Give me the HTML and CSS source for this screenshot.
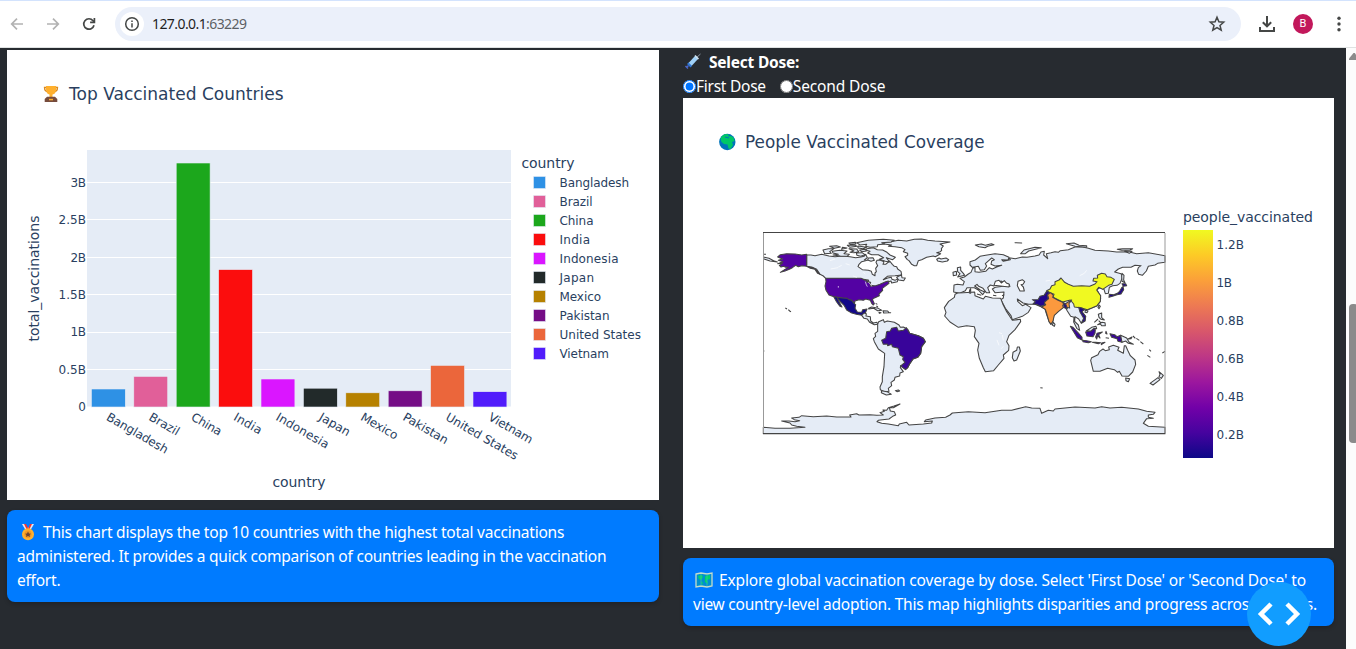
FILE: index.html
```html
<!DOCTYPE html>
<html lang="en">
<head>
<meta charset="utf-8">
<title>Vaccination Dashboard</title>
<link rel="stylesheet" href="styles.css">
</head>
<body>
<header class="toolbar">
  <div class="nav">
    <svg width="16" height="16" viewBox="0 0 16 16" class="nav-off"><path d="M14 8H3M8 2.700L2.700 8L8 13.300"/></svg>
    <svg width="16" height="16" viewBox="0 0 16 16" class="nav-off"><path d="M2 8H13M8 2.700L13.300 8L8 13.300"/></svg>
    <svg width="16" height="16" viewBox="0 0 16 16" class="nav-on"><path d="M13 9.200A5.200 5.200 0 1 1 12 4.700L13.300 6"/><path d="M13.400 2V6.300H9.100"/></svg>
  </div>
  <div class="address">
    <span class="site-info"><svg width="16" height="16" viewBox="0 0 16 16"><circle cx="8" cy="8" r="6.300"/><path d="M8 7.300V11.500M8 4.500V6"/></svg></span>
    <span class="url"><b>127.0.0.1</b>:63229</span>
    <svg class="star" width="18" height="18" viewBox="0 0 18 18"><path d="M9 2.300L10.900 6.800L15.700 7.200L12 10.400L13.200 15.200L9 12.600L4.800 15.200L6 10.400L2.300 7.200L7.100 6.800Z"/></svg>
  </div>
  <svg class="download" width="18" height="18" viewBox="0 0 18 18"><path d="M9 1V11M4.800 7.200L9 11.300L13.200 7.200M2 12V16H16V12"/></svg>
  <span class="avatar">B</span>
  <svg class="more" width="4" height="16" viewBox="0 0 4 16"><circle cx="2" cy="2.300" r="1.700"/><circle cx="2" cy="8" r="1.700"/><circle cx="2" cy="13.700" r="1.700"/></svg>
</header>
<div class="viewport">
  <main class="page">
    <section class="column column-left">
      <svg class="chart" viewBox="7 50 652 450" width="652" height="450">
        <g class="trophy">
          <path d="M46.500 87.500H44.500Q44.500 91.500 48 91.700M55.500 87.500H57.500Q57.500 91.500 54 91.700" fill="none" stroke="#d98a22" stroke-width="1.300"/>
          <path d="M46 86H56.200V89Q56 94 52.500 94.500V97.500H49.500V94.500Q46.200 94 46 89Z" fill="#ffb02e"/>
          <path d="M47 96.800H55L57.300 99V102H44.700V99Z" fill="#764b3c"/><rect x="49" y="98.800" width="4" height="1.500" fill="#ffb02e"/>
        </g>
        <text class="title" x="69" y="100" textLength="214.500" lengthAdjust="spacingAndGlyphs">Top Vaccinated Countries</text>
        <rect x="87" y="150" width="424" height="257" fill="#e5ecf6"/>
        <path d="M87 182.500H511M87 219.500H511M87 257.500H511M87 294.500H511M87 332.500H511M87 369.500H511M87 407H511" stroke="#fff"/>
        <g stroke="#e5ecf6" stroke-width=".6">
          <rect x="91.400" y="389" width="33.900" height="18" fill="#2e91e5"/>
          <rect x="133.800" y="376.400" width="33.900" height="30.600" fill="#e15f99"/>
          <rect x="176.200" y="163" width="33.900" height="244" fill="#1ca71c"/>
          <rect x="218.600" y="269.600" width="33.900" height="137.400" fill="#fb0d0d"/>
          <rect x="261" y="379" width="33.900" height="28" fill="#da16ff"/>
          <rect x="303.400" y="388.200" width="33.900" height="18.800" fill="#222a2a"/>
          <rect x="345.800" y="392.800" width="33.900" height="14.200" fill="#b68100"/>
          <rect x="388.200" y="390.800" width="33.900" height="16.200" fill="#750d86"/>
          <rect x="430.600" y="365.400" width="33.900" height="41.600" fill="#eb663b"/>
          <rect x="473" y="391.700" width="33.900" height="15.300" fill="#511cfb"/>
        </g>
        <g class="tick" text-anchor="end">
          <text x="86" y="187" textLength="15.500">3B</text><text x="86" y="224" textLength="27.500">2.5B</text><text x="86" y="262" textLength="15.500">2B</text><text x="86" y="299" textLength="27.500">1.5B</text><text x="86" y="336" textLength="15.500">1B</text><text x="86" y="374" textLength="27.500">0.5B</text><text x="86" y="411">0</text>
        </g>
        <g class="tick">
          <text transform="translate(105.500 419.500) rotate(30)" textLength="69">Bangladesh</text>
          <text transform="translate(148 419.500) rotate(30)" textLength="33">Brazil</text>
          <text transform="translate(190.300 419.500) rotate(30)" textLength="33">China</text>
          <text transform="translate(232.700 419.500) rotate(30)" textLength="30.500">India</text>
          <text transform="translate(275 419.500) rotate(30)" textLength="59">Indonesia</text>
          <text transform="translate(318 419.500) rotate(30)" textLength="34">Japan</text>
          <text transform="translate(359.700 419.500) rotate(30)" textLength="41">Mexico</text>
          <text transform="translate(402 419.500) rotate(30)" textLength="50">Pakistan</text>
          <text transform="translate(444.700 419.500) rotate(30)" textLength="81.500">United States</text>
          <text transform="translate(487.500 419.500) rotate(30)" textLength="49">Vietnam</text>
        </g>
        <text class="axis" x="272.500" y="487" textLength="53">country</text>
        <text class="axis" transform="translate(39 341.500) rotate(-90)" textLength="126">total_vaccinations</text>
        <text class="axis" x="521.500" y="168" textLength="53">country</text>
        <g stroke="#e5ecf6" stroke-width=".6">
          <rect x="533.500" y="176.500" width="12" height="12" fill="#2e91e5"/><rect x="533.500" y="195.500" width="12" height="12" fill="#e15f99"/><rect x="533.500" y="214.500" width="12" height="12" fill="#1ca71c"/><rect x="533.500" y="233.500" width="12" height="12" fill="#fb0d0d"/><rect x="533.500" y="252.500" width="12" height="12" fill="#da16ff"/><rect x="533.500" y="271.500" width="12" height="12" fill="#222a2a"/><rect x="533.500" y="290.500" width="12" height="12" fill="#b68100"/><rect x="533.500" y="309.500" width="12" height="12" fill="#750d86"/><rect x="533.500" y="328.500" width="12" height="12" fill="#eb663b"/><rect x="533.500" y="347.500" width="12" height="12" fill="#511cfb"/>
        </g>
        <g class="tick">
          <text x="559.500" y="187" textLength="69.500">Bangladesh</text><text x="559.500" y="206" textLength="33">Brazil</text><text x="559.500" y="225" textLength="34">China</text><text x="559.500" y="244" textLength="30.500">India</text><text x="559.500" y="263" textLength="59">Indonesia</text><text x="559.500" y="282" textLength="34.500">Japan</text><text x="559.500" y="301" textLength="41.500">Mexico</text><text x="559.500" y="320" textLength="50">Pakistan</text><text x="559.500" y="339" textLength="81.500">United States</text><text x="559.500" y="358" textLength="49.500">Vietnam</text>
        </g>
      </svg>
      <div class="note note-left">
        <div class="line l1"><svg class="emoji medal" width="16" height="18" viewBox="0 0 16 18"><path d="M2 1H5L9 7L6 8Z" fill="#e1e8f0"/><path d="M14 1H11L7 7L10 8Z" fill="#e1e8f0"/><path d="M4 1H6L8.500 6L7 7ZM12 1H10L8 6L9 7Z" fill="#f8312f"/><circle cx="8" cy="11.300" r="6" fill="#ffb02e"/><circle cx="8" cy="11.300" r="3.700" fill="#f59a22"/><path d="M8 8.500L9 10.500L11 10.700L9.600 12L10 14L8 13L6 14L6.400 12L5 10.700L7 10.500Z" fill="#6d4534"/></svg>This chart displays the top 10 countries with the highest total vaccinations</div>
        <div class="line l2">administered. It provides a quick comparison of countries leading in the vaccination</div>
        <div class="line l3">effort.</div>
      </div>
    </section>
    <section class="column column-right">
      <div class="dose-label"><svg class="emoji syringe" width="18" height="18" viewBox="0 0 18 18"><path d="M12 5L16.500 1" stroke="#8795a5"/><path d="M11 3L14 6L7.500 13L4.500 10Z" fill="#9fd0f7"/><path d="M11 2.500L14.500 6" stroke="#d5e8f7" stroke-width="1.500"/><path d="M4.500 9.500L8 13L6.500 14.500L3 11Z" fill="#2f78d8"/><path d="M4.500 12.500L2.500 14.500M1.500 13L4 15.500" stroke="#4b67c9" stroke-width="1.500"/></svg><strong>Select Dose:</strong></div>
      <div class="dose-options">
        <label class="opt o1"><input type="radio" name="dose" checked><span>First Dose</span></label>
        <label class="opt o2"><input type="radio" name="dose"><span>Second Dose</span></label>
      </div>
      <svg class="chart" viewBox="683 98 651 450" width="651" height="450">
        <defs><linearGradient id="plasma" x1="0" y1="1" x2="0" y2="0"><stop offset="0" stop-color="#0d0887"/><stop offset=".111" stop-color="#46039f"/><stop offset=".222" stop-color="#7201a8"/><stop offset=".333" stop-color="#9c179e"/><stop offset=".444" stop-color="#bd3786"/><stop offset=".556" stop-color="#d8576b"/><stop offset=".667" stop-color="#ed7953"/><stop offset=".778" stop-color="#fb9f3a"/><stop offset=".889" stop-color="#fdca26"/><stop offset="1" stop-color="#f0f921"/></linearGradient></defs>
        <circle cx="727.300" cy="142" r="8.200" fill="#0074ba"/>
        <path d="M720.500 138.500Q722 134.500 726 134L729 134.500L728 136.500L731 136L733.500 137.500L734.500 141L732 142L733 145L730.500 149L728.500 148.500L727.500 144.500L724 144L721.500 142ZM720 139Z" fill="#00c766"/>
        <path d="M725 137L729 138" stroke="#0074ba" stroke-width="1.200"/>
        <text class="title" x="745" y="148" textLength="239.500" lengthAdjust="spacingAndGlyphs">People Vaccinated Coverage</text>

        <!-- Western hemisphere -->
        <g class="geo" transform="translate(755 225) scale(.33333)">
          <path d="M25 607L60 610L105 610L150 607L125 604L110 600L105 594L80 588L102 588L120 590L134 587L118 584L110 579L132 577L140 572L175 575L215 573L245 576L288 576L284 570L305 566L312 570L345 569L365 571L385 570L375 563L388 559L384 555L395 556L400 548L417 543L435 537L415 548L403 548L406 558L418 560L422 570L413 574L402 582L370 586L366 590L380 595L400 597L430 602L433 597L455 592L462 600L505 597L530 594L532 588L508 590L512 585L540 579L572 577L585 570L592 564L640 560L690 563L740 556L770 556L800 548L812 545L830 549L855 550L860 565L880 556L895 558L900 552L960 546L1020 549L1040 545L1065 549L1100 547L1150 552L1175 559L1200 562L1195 568L1180 570L1180 577L1195 580L1175 581L1165 595L1180 604L1230 607V626H25Z"/>
          <path d="M155 90L168 90L180 92L200 88L222 93L240 95L262 93L285 95L302 98L318 96L327 94L332 88L337 98L328 105L337 106L320 110L312 118L309 125L322 134L340 136L349 139L352 148L360 152L360 144L364 140L362 130L368 122L363 112L366 106L375 105L387 110L384 118L392 118L404 108L412 118L418 124L425 125L428 132L438 139L440 150L420 152L405 153L397 154L385 164L398 159L409 157L411 163L420 166L430 160L427 170L410 174L408 168L400 170L375 182L362 184L345 180L340 165L320 162L212 160L205 153L195 148L185 133L170 126L155 124Z"/>
          <path class="c3" d="M155 88V124L165 127L173 128L184 135L195 148L188 145L180 133L166 130L155 124L140 122L130 125L122 121L112 128L103 133L90 138L76 142L90 133L100 127L92 127L86 124L78 126L73 121L82 115L68 116L84 110L70 106L83 102L68 96L76 89L95 86L120 87L140 90Z"/>
          <path class="c3" d="M212 160H318L328 165L340 168L334 171L347 172L345 178L347 184L362 182L375 178L392 170L400 168L402 175L390 184L382 190L383 196L372 207L373 212L360 218L352 223L358 236L355 240L350 235L346 226L332 222L325 226L312 224L300 228L298 236L290 226L282 224L276 220L262 219L237 215L222 210L213 196L210 183L213 170Z"/>
          <path class="c0" d="M237 215L262 219L276 220L282 224L290 226L298 236L302 239L300 250L307 261L320 262L323 254L336 252L331 264L326 270L320 271L304 268L288 263L275 255L268 242L256 230L247 219L252 230L261 246L255 244L245 231L237 217Z"/>
          <path d="M320 271L327 264L334 266L333 273L346 275L347 288L355 294L366 292L368 298L358 299L344 292L337 282L327 280Z"/>
          <path d="M368 298L371 290L385 284L388 292L397 288L418 292L432 300L436 307L445 306L458 313L464 325L490 332L505 340L511 350L500 365L497 385L488 397L474 402L465 415L458 428L450 432L437 422L436 428L445 440L435 444L434 453L420 457L418 465L408 472L410 482L400 490L402 499L389 501L376 494L375 486L382 470L382 455L387 425L389 385L370 372L358 350L355 341L362 334L360 325L368 319Z"/>
          <path class="c2" d="M410 310L425 307L430 318L445 316L454 308L464 325L490 332L505 340L511 350L500 365L497 385L488 397L474 402L465 415L458 428L452 434L437 423L450 412L443 403L445 395L435 390L430 370L412 365L410 358L398 362L397 357L385 358L380 346L392 340L395 320L406 318Z"/>
          <path d="M380 497L396 500L409 508L394 510L379 503ZM421 497L430 495L434 498L426 500Z"/>
          <path d="M400 64L410 60L370 55L400 52L430 46L455 48L478 43L500 42L518 46L540 48L585 51L555 57L565 63L559 71L560 76L556 80L545 83L557 86L541 95L535 93L515 97L500 104L490 107L485 122L478 122L470 118L462 107L457 104L450 95L458 91L458 85L445 80L450 74L440 68L420 65Z"/>
          <path d="M545 103L552 99L558 102L573 99L581 104L577 108L562 111L548 108Z"/>
          <path d="M305 53L340 46L385 43L418 46L408 51L380 53L389 57L368 59L367 65L345 67L332 64L335 58L315 60Z"/>
          <path d="M335 71L355 68L367 74L383 75L396 82L405 90L421 97L413 104L394 98L404 111L391 109L373 103L386 98L370 89L350 89L338 84L345 79L333 76Z"/>
          <path d="M232 79L255 76L276 78L267 86L283 88L276 94L256 93L234 90L250 88L234 84ZM204 75L220 71L237 71L224 80L229 85L209 86ZM282 71L305 72L311 80L297 83L285 82L297 78ZM304 84L321 83L330 89L317 94L306 91ZM277 61L300 60L306 64L285 67ZM309 63L335 67L324 71L309 69ZM224 64L245 62L256 66L238 70ZM262 67L276 69L260 73ZM282 54L301 52L303 56L286 58ZM314 75L331 73L334 78L320 80ZM340 99L354 98L358 106L348 109L338 105Z"/>
          <path d="M425 157L439 149L441 158L451 159L446 167L431 165Z"/>
          <path d="M341 250L350 246L370 250L380 256L368 257L356 250L341 252ZM384 257L398 258L402 263L386 264ZM372 262L378 263L373 265ZM403 263H407ZM362 235L367 238M364 243L369 246M91 249L96 252M100 254L104 258L108 260M25 96L42 100L56 107L67 111L45 108L25 101M25 88H33M25 378H28"/>
          <path d="M331 170Q334 181 337 185M340 171L348 180L350 184M250 183V188" class="lake"/>
          <path d="M225 107L240 102M250 126L260 121M227 132L249 128M272 116L284 120M294 153L306 157M325 142L331 147" class="lake"/>
        </g>
        <!-- Eastern hemisphere -->
        <g class="geo" transform="translate(935 225) scale(.33333)">
          <path d="M57 180L67 178L84 180L88 170L75 160L88 156L100 147L108 142L113 130L120 127L120 140L132 142L152 139L163 128L172 132L185 126L200 121L180 123L168 118L170 108L178 104L170 99L161 107L151 116L155 123L148 134L136 136L130 124L112 127L105 120L105 110L121 105L135 94L152 91L180 86L205 89L222 97L219 105L200 104L205 109L226 104L222 98L241 101L262 96L276 97L300 93L312 90L318 81L328 79L326 90L338 101L334 86L348 83L360 80L370 82L376 77L400 74L420 66L440 65L460 70L480 76L520 78L545 81L580 80L605 86L640 83L690 92L690 112L668 115L660 120L640 124L634 138L622 151L611 148L607 138L610 128L618 122L600 121L588 127L563 127L550 132L539 141L558 146L563 155L555 175L546 181L533 182L523 187L520 205L511 206L507 193L494 188L485 195L490 201L493 211L497 220L495 230L485 243L470 249L455 256L441 253L438 260L452 275L450 287L438 293L431 282L420 275L419 289L430 300L434 316L426 311L416 291L417 277L407 274L397 258L390 245L378 250L365 263L355 270L354 288L348 298L343 291L335 269L330 252L318 245L300 238L281 238L264 234L247 222L248 229L262 242L272 238L288 248L280 262L262 274L232 284L228 272L211 250L198 224L205 219L207 201L180 203L172 192L181 187L205 184L225 184L220 177L207 173L198 168L192 173L186 171L177 183L166 180L158 188L164 203L154 203L144 190L131 184L126 178L119 183L136 195L149 201L143 209L130 195L118 188L96 188L91 197L74 205L56 201Z"/>
          <path d="M60 208L68 204L85 203L119 201L120 212L145 222L151 214L172 219L197 220L203 236L215 260L232 286L256 283L257 290L240 314L222 331L215 350L222 362L221 376L205 390L207 400L190 420L176 437L151 440L145 428L133 400L128 375L132 355L118 335L121 316L118 305L95 302L70 307L45 291L29 273L33 262L28 248L41 229L58 217Z"/>
          <path class="sea" d="M177 181L181 169L192 166L199 174L208 167L214 174L223 178L222 186L203 184ZM249 169L262 164L269 170L264 178L258 179L265 186L268 198L255 198L247 182Z"/>
          <path d="M67 128L77 126L77 136L85 145L89 151L68 156L75 146L68 140ZM54 142L64 139L65 150L55 152ZM121 60L139 57L151 61L169 56L177 59L158 64L150 68L132 65ZM240 53L260 54ZM257 86L267 75L300 67L319 68L281 78L271 86ZM394 56L417 54L432 61L455 62L455 67L420 64ZM547 73L563 71L593 71L585 75L560 76ZM569 79L591 79L583 85Z"/>
          <path d="M247 366L253 366L256 378L245 405L237 408L232 398L234 382L245 376ZM355 292L360 298L358 304L352 300ZM104 195L107 191L107 205L103 204ZM126 207L139 211M174 211L184 212M201 212L208 209"/>
          <path class="c12" d="M335 197L345 192L350 182L360 179L360 170L372 165L378 159L389 172L400 178L415 184L440 182L464 184L480 177L486 170L474 168L476 160L488 159L487 151L500 145L511 147L516 155L528 157L538 163L531 178L521 181L503 193L491 187L485 195L489 201L497 212L496 229L486 242L470 249L457 254L440 249L418 246L416 237L406 225L383 231L363 221L354 217L357 208L345 203Z"/>
          <path class="c8" d="M337 204L347 203L355 211L353 217L369 226L383 232L391 236L410 225L402 236L404 249L396 247L388 237L383 241L385 248L370 260L358 271L354 288L348 298L342 290L334 262L331 253L320 246L332 239L325 232L341 221L338 211Z"/>
          <path class="c1" d="M335 199L345 203L337 210L340 221L329 231L329 240L317 244L304 238L294 237L301 230L292 224L309 224L315 214L327 211Z"/>
          <path class="c1" d="M384 233L393 239L397 251L388 248ZM431 247L442 250L448 254L441 260L452 274L450 288L439 295L446 280L435 261Z"/>
          <path class="c1" d="M561 176L572 176L575 182L565 184ZM564 185L566 194L558 207L546 209L535 213L522 217L523 208L536 209L547 205L553 200L561 187Z"/>
          <path class="c2" d="M406 304L414 307L429 323L441 337L441 345L427 338L415 319ZM443 346L455 347L469 350L460 353L444 350ZM472 352L482 352L497 353L490 356ZM500 354L510 352L499 359ZM452 321L468 317L476 309L481 314L480 325L474 335L456 333ZM486 325L502 321L491 329L495 339L488 332L485 342L482 336ZM525 326L539 329L546 335L557 331L561 352L549 349L546 341L530 337ZM513 319L516 327L512 325ZM512 338L522 340"/>
          <path d="M454 318L470 307L483 304L485 311L477 310L468 318ZM490 268L500 264L500 278L508 285L498 283L492 277ZM488 299L501 292L510 293L511 302L500 302L496 297ZM478 292L489 282M491 287L498 294M492 240L496 244L492 251L489 247ZM451 256L459 258L456 263L450 262Z"/>
          <path d="M557 331L575 339L582 351L595 358L580 355L572 348L561 352ZM579 342L591 336L588 341ZM594 333L601 340M604 340L613 346M616 350L625 357M643 374L648 379M637 391L646 397M682 384L690 379M561 145L567 151L566 165L570 173L561 169L560 154Z"/>
          <path d="M504 372L494 379L489 389L470 398L467 406L475 439L495 439L518 430L538 434L548 442L553 439L561 453L580 454L593 441L602 418L600 405L586 392L578 376L572 362L568 362L565 385L548 376L552 367L535 361L521 366L523 374L511 377ZM572 459L584 461L580 470L573 467ZM672 440L685 451L679 460L672 455L675 448ZM669 458L675 464L654 480L645 475ZM316 488L323 489"/>
          <path class="lake" d="M192 323L201 326M202 330L205 346M186 345L192 361M199 371L205 364M434 152L448 145L455 136M332 168L345 166M190 118L198 116M204 120L208 118"/>
        </g>
        <path d="M763.500 433V233" stroke="#999" stroke-width="1"/><path d="M1165 433V233" stroke="#999"/><path d="M763 232.500H1165M763 433.500H1165" stroke="#444"/>
        <text class="axis" x="1183" y="222" textLength="130">people_vaccinated</text>
        <rect x="1183" y="230" width="30" height="228" fill="url(#plasma)"/>
        <g class="tick"><text x="1216.500" y="249" textLength="27.500">1.2B</text><text x="1216.500" y="287" textLength="15.500">1B</text><text x="1216.500" y="325" textLength="27.500">0.8B</text><text x="1216.500" y="363" textLength="27.500">0.6B</text><text x="1216.500" y="401" textLength="27.500">0.4B</text><text x="1216.500" y="439" textLength="27.500">0.2B</text></g>
      </svg>
      <div class="note note-right">
        <div class="line r1"><svg class="emoji map" width="18" height="16" viewBox="0 0 18 16"><path d="M1 2L6 1L12 2L17 1V14L12 15L6 14L1 15Z" fill="#008fcf" stroke="#c5dcc8" stroke-width="1.300"/><path d="M3 4L7 3L8 5L6 8L4 7ZM10 4L15 3L15 7L12 8L13 12L10 10ZM6 9L8 11L7 13Z" fill="#00d26a"/><path d="M6 2V14M12 2V14" stroke="#4cc7b0" stroke-width=".6"/></svg>Explore global vaccination coverage by dose. Select 'First Dose' or 'Second Dose' to</div>
        <div class="line r2">view country-level adoption. This map highlights disparities and progress across regions.</div>
      </div>
    </section>
    <button class="debug" aria-label="Debug menu"><svg width="64" height="64" viewBox="0 0 64 64"><path d="M24 22L14 32L24 42M40 22L50 32L40 42"/></svg></button>
  </main>
  <aside class="scrollbar"><i class="arrow"></i><i class="thumb"></i></aside>
</div>
</body>
</html>
```
FILE: styles.css
```css
* { box-sizing: border-box; }
body { margin: 0; width: 1356px; height: 649px; overflow: hidden; background: #fff; font: 16px/24px "Noto Sans", "Open Sans", sans-serif; }
svg { display: block; }
.toolbar { height: 48px; display: flex; align-items: center; border-top: 1px solid #d3e3fd; border-bottom: 1px solid #dfe2e2; padding-left: 9px; background: #fff; }
.nav { display: flex; gap: 20px; width: 106px; }
.nav svg { fill: none; stroke-width: 1.700; }
.nav .nav-off { stroke: #b2b2b2; }
.nav .nav-on { stroke: #454746; }
.address { display: flex; align-items: center; width: 1126px; height: 34px; padding: 0 15px 0 5px; border-radius: 17px; background: #ebf0fa; }
.site-info { display: grid; place-items: center; width: 24px; height: 24px; border-radius: 50%; background: #fff; }
.site-info svg { fill: none; stroke: #444746; stroke-width: 1.500; }
.url { margin-left: 8px; flex: 1; font: 14px/20px "Noto Sans", sans-serif; letter-spacing: -.58px; color: #5c6064; }
.url b { font-weight: 400; color: #1f1f1f; }
.star, .download { fill: none; stroke: #454746; stroke-width: 1.500; }
.download { margin-left: 17px; stroke-width: 2; }
.avatar { margin-left: 17px; width: 20px; height: 20px; border-radius: 50%; background: #c2185b; color: #fff; font: 11px/20px Roboto, sans-serif; text-align: center; }
.more { margin-left: 24px; fill: #454746; }
.viewport { display: flex; height: 601px; }
.page { position: relative; width: 1346px; display: flex; align-items: flex-start; gap: 24px; padding-left: 7px; background: #272b30; }
.column-left { width: 652px; padding-top: 2px; }
.column-right { width: 651px; padding-top: 2px; color: #fff; }
.chart { background: #fff; }
.chart text { font-family: "DejaVu Sans", Verdana, sans-serif; fill: #2a3f5f; }
.chart .title { font-size: 17px; }
.chart .tick text { font-size: 12px; }
.chart .axis { font-size: 14px; }
.geo { fill: #e5ecf6; stroke: #444; stroke-width: 3.200; stroke-linejoin: round; }
.geo .lake { fill: none; stroke: #fff; stroke-width: 2; }
.geo .sea { fill: #fff; }
.c0 { fill: #120889; }
.c1 { fill: #21068d; }
.c2 { fill: #38049a; }
.c3 { fill: #5302a3; }
.c8 { fill: #fb993e; }
.c12 { fill: #f0f921; }
.note { margin-top: 10px; padding: 10px; border-radius: 8px; background: #007bff; color: #fff; box-shadow: 0 2px 4px rgba(0,0,0,.2); }
.note-left { height: 92px; }
.note-right { height: 68px; }
.line { display: flex; align-items: center; height: 24px; white-space: nowrap; font-size: 15.500px; }
.emoji { flex: none; fill: none; }
.medal { margin: 0 7px 0 3px; }
.map { margin: 0 6px 0 2px; }
.syringe { margin: 0 7px 0 1px; }
.l1 { letter-spacing: -.21px; }
.l2, .l3 { letter-spacing: -.23px; }
.r1 { letter-spacing: -.14px; }
.r2 { letter-spacing: -.23px; }
.dose-label, .dose-options { display: flex; align-items: center; height: 24px; }
.dose-label { font-size: 15.500px; letter-spacing: -.22px; }
.dose-options { font-size: 15.500px; letter-spacing: -.25px; gap: 14px; }
.opt { display: flex; align-items: center; }
.o2 { letter-spacing: -.15px; }
.opt input { margin: 0; width: 13px; height: 13px; accent-color: #0075ff; }
.opt span { white-space: nowrap; }
.debug { position: absolute; left: 1247px; top: 534px; width: 64px; height: 64px; padding: 0; border: 0; border-radius: 50%; background: #119dff; }
.debug path { fill: none; stroke: #fff; stroke-width: 4.500; }
.scrollbar { width: 10px; padding: 5px 0 0 3px; background: #fcfcfc; overflow: hidden; }
.scrollbar i { display: block; }
.arrow { width: 10px; height: 7px; background: #8b8b8b; clip-path: polygon(45% 0, 58% 0, 100% 90%, 95% 100%, 0 100%, 0 80%); }
.thumb { width: 9px; height: 139px; margin-top: 244px; border-radius: 4px; background: #8b8b8b; }
```
